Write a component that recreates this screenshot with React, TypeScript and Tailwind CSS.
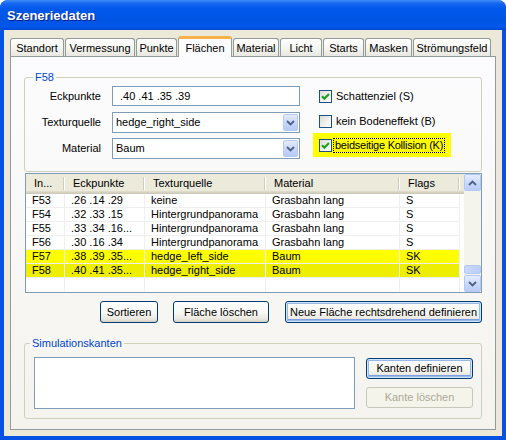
import React from 'react';

const tabs = [
  { label: 'Standort', w: 'w-[54px]' },
  { label: 'Vermessung', w: 'w-[70px]' },
  { label: 'Punkte', w: 'w-[41px]' },
  { label: 'Flächen', w: 'w-[54px]', active: true },
  { label: 'Material', w: 'w-[46px]' },
  { label: 'Licht', w: 'w-[42px]' },
  { label: 'Starts', w: 'w-[41px]' },
  { label: 'Masken', w: 'w-[47px]' },
  { label: 'Strömungsfeld', w: 'w-[78px]' },
];

const columns = [
  { label: 'In...', w: 'w-[39px]' },
  { label: 'Eckpunkte', w: 'w-[80px]' },
  { label: 'Texturquelle', w: 'w-[121px]' },
  { label: 'Material', w: 'w-[134px]' },
  { label: 'Flags', w: 'w-[60px]' },
];

const rows = [
  { cells: ['F53', '.26 .14 .29', 'keine', 'Grasbahn lang', 'S'], bg: 'bg-white' },
  { cells: ['F54', '.32 .33 .15', 'Hintergrundpanorama', 'Grasbahn lang', 'S'], bg: 'bg-white' },
  { cells: ['F55', '.33 .34 .16...', 'Hintergrundpanorama', 'Grasbahn lang', 'S'], bg: 'bg-white' },
  { cells: ['F56', '.30 .16 .34', 'Hintergrundpanorama', 'Grasbahn lang', 'S'], bg: 'bg-white' },
  { cells: ['F57', '.38 .39 .35...', 'hedge_left_side', 'Baum', 'SK'], bg: 'bg-[#FFFF00]' },
  { cells: ['F58', '.40 .41 .35...', 'hedge_right_side', 'Baum', 'SK'], bg: 'bg-[#EEEE00]' },
];

const btn =
  'rounded-[3px] border border-[#003C74] bg-[linear-gradient(180deg,#FFFFFF_0%,#F7F7F4_55%,#E9E7DE_85%,#D6D0C5_100%)] flex items-center justify-center text-black whitespace-nowrap';
const btnDefault =
  'shadow-[inset_0_0_0_1px_#CEE7FF,inset_0_0_0_2px_#98B8EA,inset_0_-2px_0_1px_#7B9EE6]';

function Check({ checked }: { checked?: boolean }) {
  return (
    <div className="w-[13px] h-[13px] border border-[#1C5180] bg-[linear-gradient(135deg,#DCDCD7_0%,#F2F2EE_60%,#FFFFFF_100%)] flex items-center justify-center shrink-0">
      {checked && (
        <svg width="11" height="11" viewBox="0 0 11 11">
          <path d="M2 5.2 L4.4 7.6 L9 3" fill="none" stroke="#21A121" strokeWidth="2.2" />
        </svg>
      )}
    </div>
  );
}

function Chevron({ up }: { up?: boolean }) {
  return (
    <svg width="9" height="6" viewBox="0 0 9 6">
      <path
        d={up ? 'M1 5 L4.5 1.5 L8 5' : 'M1 1 L4.5 4.5 L8 1'}
        fill="none"
        stroke="#4D6185"
        strokeWidth="1.8"
      />
    </svg>
  );
}

function Combo({ value }: { value: string }) {
  return (
    <div className="w-[188px] h-[21px] border border-[#7F9DB9] bg-white flex p-[1px]">
      <div className="flex-1 flex items-center pl-[2px]">{value}</div>
      <div className="w-[15px] h-full rounded-[2px] border border-[#B5C8F6] bg-[linear-gradient(180deg,#E4ECFE_0%,#C8D7FB_50%,#B6CAF6_100%)] flex items-center justify-center">
        <Chevron />
      </div>
    </div>
  );
}

function ScrollBtn({ up }: { up?: boolean }) {
  return (
    <div className="h-[17px] rounded-[2px] border border-[#B6C9F3] bg-[linear-gradient(180deg,#E4ECFE_0%,#CCDAFB_50%,#B9CCF7_100%)] flex items-center justify-center">
      <Chevron up={up} />
    </div>
  );
}

export default function App() {
  return (
    <div className="w-[506px] h-[440px] font-['Liberation_Sans',Arial,sans-serif] text-[11px] leading-[13px] text-black">
      <div className="w-[506px] h-[440px] rounded-t-[8px] overflow-hidden bg-[#0652E2] flex flex-col">
        {/* title bar */}
        <div className="h-[30px] shrink-0 bg-[linear-gradient(180deg,#3F8CF7_0%,#1466F0_12%,#0058EA_30%,#0054E3_70%,#0058EC_90%,#0046D0_100%)] flex items-center pl-[7px]">
          <span className="text-white font-bold text-[13px] [text-shadow:1px_1px_0_#0A1E8C]">Szeneriedaten</span>
        </div>

        {/* body */}
        <div className="flex-1 mx-[4px] mb-[4px] bg-[#ECE9D8] flex flex-col">
          {/* tabs */}
          <div className="h-[26px] flex items-end gap-[1px] pl-[6px]">
            {tabs.map((t) =>
              t.active ? (
                <div
                  key={t.label}
                  className={`${t.w} h-[21px] -mb-[1px] relative z-10 rounded-t-[3px] border-x border-[#919B9C] border-t-[3px] border-t-[#F4B249] bg-[#FCFCFE] flex items-center justify-center whitespace-nowrap`}
                >
                  {t.label}
                </div>
              ) : (
                <div
                  key={t.label}
                  className={`${t.w} h-[18px] rounded-t-[3px] border border-b-0 border-[#919B9C] bg-[linear-gradient(180deg,#FFFFFF_0%,#F3F3EF_60%,#E8E7E1_100%)] flex items-center justify-center pt-[1px] whitespace-nowrap`}
                >
                  {t.label}
                </div>
              )
            )}
          </div>

          {/* tab page */}
          <div className="ml-[6px] w-[486px] h-[374px] border border-[#919B9C] bg-[linear-gradient(180deg,#FCFCFE_0%,#F4F3EE_100%)] flex flex-col">
            {/* F58 group */}
            <div className="relative ml-[13px] mt-[20px] w-[458px] h-[95px] rounded-[3px] border border-[#D0D0BF] flex">
              <span className="absolute left-[8px] top-[-7px] px-[2px] bg-[#FBFBFC] text-[#0046D5]">F58</span>
              <div className="flex flex-col pt-[8px]">
                <div className="flex items-center h-[20px]">
                  <span className="w-[76px] text-right">Eckpunkte</span>
                  <div className="ml-[11px] w-[188px] h-[20px] border border-[#7F9DB9] bg-white flex items-center pl-[7px]">
                    .40 .41 .35 .39
                  </div>
                </div>
                <div className="flex items-center h-[21px] mt-[6px]">
                  <span className="w-[76px] text-right">Texturquelle</span>
                  <div className="ml-[11px]">
                    <Combo value="hedge_right_side" />
                  </div>
                </div>
                <div className="flex items-center h-[21px] mt-[5px]">
                  <span className="w-[76px] text-right">Material</span>
                  <div className="ml-[11px]">
                    <Combo value="Baum" />
                  </div>
                </div>
              </div>
              <div className="ml-[13px] pt-[6px] flex flex-col">
                <div className="h-[25px] flex items-center pl-[6px] whitespace-nowrap">
                  <Check checked />
                  <span className="ml-[2px] px-[1px] border border-transparent">Schattenziel (S)</span>
                </div>
                <div className="h-[24px] flex items-center pl-[6px] whitespace-nowrap">
                  <Check />
                  <span className="ml-[2px] px-[1px] border border-transparent">kein Bodeneffekt (B)</span>
                </div>
                <div className="h-[24px] w-[138px] bg-[#FFFF00] flex items-center pl-[6px] whitespace-nowrap">
                  <Check checked />
                  <span className="ml-[1px] px-[1px] border border-dotted border-black shrink-0 tracking-[-0.25px]">beidseitige Kollision (K)</span>
                </div>
              </div>
            </div>

            {/* list view */}
            <div className="ml-[14px] mt-[1px] w-[457px] h-[120px] border border-[#7F9DB9] bg-white flex">
              <div className="w-[438px] flex flex-col">
                <div className="h-[20px] shrink-0 flex bg-[linear-gradient(180deg,#EBEADB_0%,#EBEADB_82%,#E2DECD_86%,#D6D2C2_92%,#CBC7B8_100%)]">
                  {columns.map((c) => (
                    <div key={c.label} className={`${c.w} flex items-center pb-[2px]`}>
                      <span className="flex-1 pl-[8px]">{c.label}</span>
                      <span className="w-[1px] h-[13px] bg-[#CFCCBB]" />
                      <span className="w-[1px] h-[13px] bg-white" />
                    </div>
                  ))}
                  <div className="flex-1" />
                </div>
                {rows.map((r) => (
                  <div key={r.cells[0]} className="h-[14px] flex">
                    {r.cells.map((v, i) => (
                      <div
                        key={i}
                        className={`${columns[i].w} ${r.bg} border-r border-b border-[#EFEFEF] overflow-hidden whitespace-nowrap pl-[6px] leading-[13px]`}
                      >
                        {v}
                      </div>
                    ))}
                  </div>
                ))}
                <div className="flex-1 flex">
                  {columns.map((c) => (
                    <div key={c.label} className={`${c.w} border-r border-[#EFEFEF]`} />
                  ))}
                </div>
              </div>
              <div className="w-[17px] flex flex-col bg-[#F4F3EC]">
                <ScrollBtn up />
                <div className="flex-1 flex flex-col justify-end pb-[1px]">
                  <div className="h-[9px] rounded-[2px] border border-[#B6C9F3] bg-[linear-gradient(90deg,#C9D8FC_0%,#BBCEF8_100%)]" />
                </div>
                <ScrollBtn />
              </div>
            </div>

            {/* buttons */}
            <div className="mt-[8px] ml-[89px] flex h-[22px]">
              <div className={`${btn} w-[58px]`}>Sortieren</div>
              <div className={`${btn} w-[96px] ml-[15px]`}>Fläche löschen</div>
              <div className={`${btn} ${btnDefault} w-[197px] ml-[16px]`}>Neue Fläche rechtsdrehend definieren</div>
            </div>

            {/* Simulationskanten group */}
            <div className="relative ml-[13px] mt-[20px] w-[458px] h-[76px] rounded-[3px] border border-[#D0D0BF] flex">
              <span className="absolute left-[5px] top-[-7px] px-[2px] bg-[#F7F7F4] text-[#0046D5]">Simulationskanten</span>
              <div className="ml-[9px] mt-[13px] w-[321px] h-[52px] border border-[#7F9DB9] bg-white" />
              <div className="ml-[11px] mt-[14px] flex flex-col">
                <div className={`${btn} ${btnDefault} w-[107px] h-[21px]`}>Kanten definieren</div>
                <div className="mt-[8px] w-[107px] h-[21px] rounded-[3px] border border-[#C9C7BA] bg-[#F5F4EA] text-[#ACA899] flex items-center justify-center">
                  Kante löschen
                </div>
              </div>
            </div>
          </div>
        </div>
      </div>
    </div>
  );
}
